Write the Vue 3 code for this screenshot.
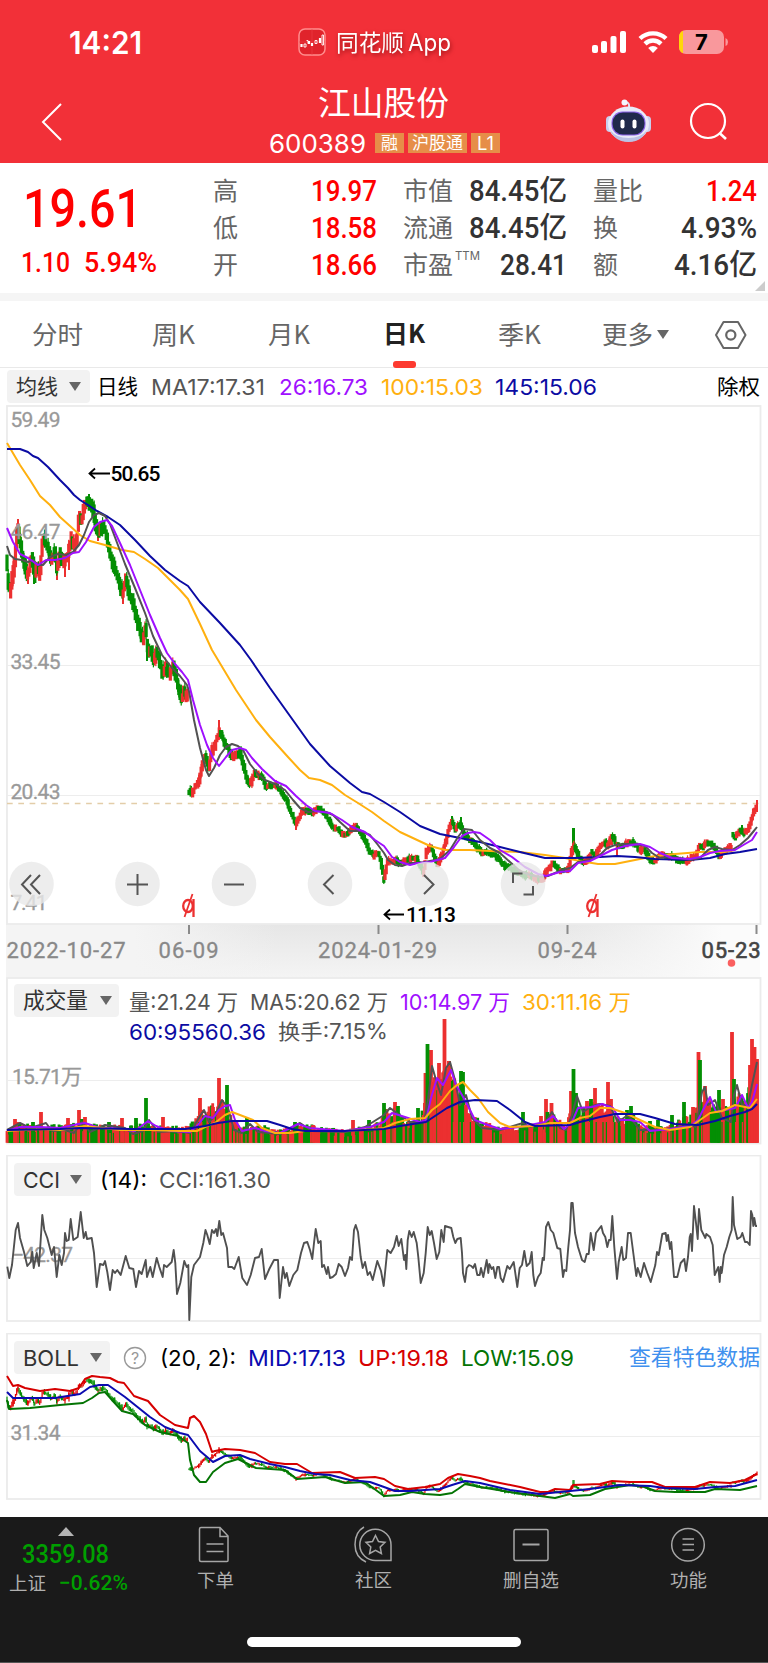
<script setup>
import { h } from "vue";

// text drawn at an exact width, box height is the cap height
const Fit = (props) => {
    const height = Math.round(props.size * 0.72);
    return h('svg', { class: 'fit', width: props.w, height, overflow: 'visible' }, [
        h('text', {
            x: 0,
            y: height,
            textLength: props.w,
            lengthAdjust: 'spacingAndGlyphs',
            'font-size': props.size,
            fill: 'currentColor'
        }, props.text)
    ]);
};
Fit.props = ['text', 'w', 'size'];

const stats = [
    [
        { label: '高', lw: 25, value: '19.97', w: 66, up: true },
        { label: '低', lw: 25, value: '18.58', w: 66, up: true },
        { label: '开', lw: 25, value: '18.66', w: 66, up: true },
    ],
    [
        { label: '市值', lw: 50, value: '84.45亿', w: 98 },
        { label: '流通', lw: 50, value: '84.45亿', w: 98 },
        { label: '市盈', lw: 50, sup: 'TTM', value: '28.41', w: 67 },
    ],
    [
        { label: '量比', lw: 50, value: '1.24', w: 51, up: true },
        { label: '换', lw: 25, value: '4.93%', w: 76 },
        { label: '额', lw: 25, value: '4.16亿', w: 83 },
    ],
];

const tabs = [
    { name: '分时', w: 51 },
    { name: '周K', w: 43 },
    { name: '月K', w: 42 },
    { name: '日K', w: 42, active: true },
    { name: '季K', w: 43 },
];

const menu = [
    { name: '下单', w: 37, icon: 'order' },
    { name: '社区', w: 37, icon: 'club' },
    { name: '删自选', w: 56, icon: 'remove' },
    { name: '功能', w: 37, icon: 'more' },
];

const tools = ['M31 875l-9 9.500 9 9.500M40 875l-9 9.500 9 9.500', 'M127 884.500h21M137.500 874v21', 'M224 884.500h20', 'M333.500 875l-9.500 9.500 9.500 9.500', 'M424 875l9.500 9.500 -9.500 9.500', 'M513 883v-9.500h9.500M533 886v8.500h-9.500'];
const toolCenters = [31.5, 137.5, 234, 330, 426.5, 523];

const parse = (str) => str.trim().split(/\s+/).map((p) => p.split(',').map(Number));

const noise = (i) => {
    const n = Math.sin(i * 127.1 + 11.7) * 43758.5453;
    return n - Math.floor(n);
};

const valueAt = (points, x) => {
    if (x <= points[0][0]) return points[0][1];
    for (let i = 1; i < points.length; i++) {
        if (x <= points[i][0]) {
            const [x0, y0] = points[i - 1];
            const [x1, y1] = points[i];
            return y0 + (y1 - y0) * (x - x0) / (x1 - x0);
        }
    }
    return points[points.length - 1][1];
};

// price path, split where the share went ex-dividend
const priceParts = [
    `7,562 8,580 10,592 13,575 15,560 17,535 18,527 20,540 22,550 24,562 27,575 29,572 32,556 35,576 37,568 40,573 42,550 44,538
    47,545 49,552 52,562 55,550 57,572 60,555 62,562 65,558 68,555 71,540 74,546 77,540 79,517 82,520 84,510 86,503 89,504 92,506
    94,514 96,527 99,532 102,527 106,532 109,548 112,560 116,570 119,580 123,594 126,580 129,592 132,598 135,612 138,622 141,632
    143,639 146,630 148,650 151,650 154,662 157,653 160,663 163,673 166,668 170,675 173,667 177,680 180,694 182,700 184,689 186,697 188,692`,
    `189,792 192,793 194,790 197,783 199,783 202,767 206,756 209,768 212,752 215,746 218,736 220,731 223,738 226,745 229,750 232,757
    236,755 240,752 243,763 246,775 249,783 252,782 255,773 259,775 263,778 266,787 270,786 274,785 278,787 282,793 286,798 290,810
    294,818 296,826 298,820 302,812 306,810 310,812 314,812 318,808 322,811 326,815 330,823 334,828 338,830 342,833 346,835 350,832
    354,826 358,828 362,835 366,842 370,852 374,856 378,852 381,860 384,880 386,870 388,860 392,862 396,860 400,863 404,861 408,859
    413,859 417,859 420,866 424,872 426,855 429,848 432,848 435,858 438,866 441,858 444,848 447,838 449,828 452,821 455,829 458,825
    461,825 464,834 468,838 473,842 478,848 482,852 486,852 490,853 494,855 498,858 502,863 506,866 510,867 515,871 520,874 525,875
    530,876 535,878 540,880 543,879 546,872 550,868 553,863 557,867 561,871 566,871 569,868 571,855 574,845 577,852 581,860 585,863
    589,858 592,852 596,855 600,846 604,843 608,845 612,836 616,843 620,846 624,845 628,843 632,842 636,845 640,850 645,850 650,860
    653,862 656,861 660,855 665,855 670,856 675,858 680,861 687,862 692,858 697,855 699,845 703,847 707,842 712,845 716,850 720,857
    724,852 728,848 732,847`,
    `733,835 736,837 740,830 744,832 748,830 751,822 753,815 756,807 757,806`,
].map(parse);

const wicks = [
    [18, 519, 540, 1], [28, 570, 584, 1], [34, 575, 584, 0], [57, 565, 580, 1], [65, 560, 577, 1], [69, 555, 570, 1],
    [89, 494, 510, 0], [98, 530, 541, 1], [123, 590, 604, 1], [147, 645, 661, 0], [219, 720, 735, 1], [296, 820, 830, 1],
    [573, 828, 850, 0], [574, 828, 852, 0], [452, 816, 826, 0], [461, 817, 830, 0], [612, 834, 845, 1], [617, 845, 856, 1],
    [742, 825, 834, 0], [757, 800, 812, 1],
];

const makeCandles = () => {
    const list = wicks.map(([x, top, bottom, up]) => ({ x, y: top, h: bottom - top, up: !!up, w: 2 }));
    let i = 0;
    for (const part of priceParts) {
        const end = part[part.length - 1][0];
        for (let x = part[0][0]; x <= end; x += 1.21) {
            i++;
            const big = x < 189 ? 1.6 : x < 260 ? 1.1 : 0.8;
            const slope = valueAt(part, x + 1.2) - valueAt(part, x - 1.2);
            const y = valueAt(part, x) + (noise(i) - 0.5) * 3 * big;
            const size = (3.5 + noise(i + 500) * 5) * big + Math.abs(slope) * 0.4;
            const up = slope + (noise(Math.floor(i / 2) + 900) - 0.5) * 6 * big < 0;
            list.push({ x, y: y - size / 2, h: size, up, w: 3.2 });
            if (noise(i + 77) > 0.75) {
                list.push({ x, y: y - size / 2 - 2.5 * big, h: size + 4 * big, up, w: 1.2 });
            }
        }
    }
    return list;
};
const candles = makeCandles();

const price = {
    ma17: '7,546 10,555 15,559 22,560 28,562 33,560 38,565 43,565 50,557 58,554 66,555 73,552 79,545 84,535 89,522 94,515 99,513 105,516 110,524 116,540 125,564 135,588 145,613 153,636 162,655 172,668 180,676 187,685 189,691 194,720 200,748 206,770 209,776 214,768 220,755 226,747 232,744 238,746 243,750 250,764 258,774 265,780 275,784 285,790 293,800 300,808 308,812 318,811 326,812 333,815 340,822 350,831 360,831 370,835 378,845 384,853 388,860 395,865 402,866 410,863 420,863 430,861 440,859 450,850 458,837 464,829 472,830 480,840 490,848 500,853 510,862 520,871 530,875 540,877 548,876 555,873 562,870 570,868 578,862 590,860 600,855 607,848 615,845 625,844 635,844 645,846 652,853 660,858 670,857 680,858 690,860 700,858 708,850 715,847 722,849 732,850 740,845 748,838 753,832 757,827',
    ma26: '7,528 13,542 20,554 28,558 38,565 46,560 55,560 65,558 73,553 79,552 86,542 94,527 100,522 107,520 112,526 120,543 130,565 140,590 150,615 160,638 167,653 175,664 182,672 188,680 193,700 200,725 207,745 213,758 219,766 226,757 232,750 240,748 246,750 252,758 262,769 275,781 286,786 296,796 306,805 315,811 330,813 342,820 352,827 365,832 375,840 384,846 392,857 400,862 410,865 418,863 430,862 445,858 454,847 462,836 468,833 474,832 480,833 490,840 500,850 512,857 525,867 538,874 546,876 560,872 570,871 578,863 590,861 600,856 612,850 625,846 640,844 650,847 660,853 672,858 690,859 700,857 710,853 720,851 735,850 745,844 752,840 757,832',
    ma100: '7,443 20,465 30,480 40,496 50,505 60,517 70,526 80,535 90,541 105,545 122,550 134,552 145,559 158,568 170,580 180,590 188,599 200,624 212,650 224,670 236,690 256,720 270,737 288,757 300,770 309,778 320,780 332,785 345,795 358,803 372,812 384,821 400,832 415,839 430,846 445,850 470,850 490,851 520,852 545,855 565,858 580,861 598,864 615,864 635,860 655,856 675,854 700,852 725,852 735,850',
    ma145: '7,449 20,449 28,452 33,456 38,458 48,467 60,480 68,488 74,495 80,500 88,505 97,511 108,517 120,525 135,540 150,556 165,570 180,581 188,586 200,602 220,623 240,645 251,660 270,688 290,716 310,744 330,766 350,783 362,792 370,794 384,802 400,812 420,826 440,834 460,838 480,842 500,847 520,852 545,858 575,858 600,857 617,856 635,857 655,859 690,860 710,858 725,854 740,852 757,849',
};

const volumeBase = parse('6,1130 14,1124 30,1126 50,1126 80,1125 110,1127 130,1126 146,1124 165,1128 190,1127 196,1118 202,1112 212,1108 220,1108 228,1114 240,1128 250,1128 260,1126 275,1130 290,1128 300,1124 320,1128 345,1131 370,1126 380,1124 384,1110 395,1112 405,1122 420,1122 424,1106 428,1068 434,1083 440,1088 446,1066 452,1070 458,1096 462,1100 468,1112 476,1120 485,1124 500,1128 515,1129 522,1124 545,1127 550,1115 556,1118 565,1128 573,1108 585,1110 595,1104 605,1106 615,1118 625,1122 632,1112 640,1126 655,1128 670,1126 680,1120 690,1118 698,1108 704,1100 712,1105 720,1110 728,1110 735,1096 745,1102 750,1080 754,1060 757,1062');
const volumeSpikes = [
    [15, 1119, 1], [33, 1122, 0], [41, 1112, 1], [68, 1118, 1], [79, 1110, 1], [82, 1119, 0], [85, 1117, 1], [109, 1122, 0],
    [122, 1118, 1], [136, 1118, 0], [146, 1098, 0], [163, 1117, 1], [200, 1098, 1], [213, 1107, 1], [222, 1100, 1], [227, 1085, 0],
    [219, 1078, 1], [247, 1118, 0], [295, 1122, 0], [313, 1125, 1], [353, 1120, 1], [369, 1120, 0], [384, 1103, 0], [395, 1102, 1],
    [398, 1106, 0], [418, 1108, 0], [425.5, 1073, 1], [431, 1050, 1], [427.5, 1044, 0], [439, 1063, 1], [444.5, 1019, 1],
    [449, 1061, 1], [461, 1071, 0], [463, 1072, 0], [466, 1105, 1], [523, 1112, 0], [541, 1116, 1], [546, 1099, 1], [547.5, 1112, 0],
    [551.5, 1103, 1], [571, 1091, 1], [573.5, 1069, 0], [576, 1093, 0], [587, 1101, 1], [591, 1099, 0], [595, 1088, 1],
    [608, 1082, 1], [611, 1099, 1], [627, 1110, 0], [631, 1106, 0], [650, 1121, 0], [658, 1120, 0], [672, 1115, 0], [684, 1102, 0],
    [693, 1107, 1], [698.5, 1052, 1], [700, 1060, 0], [705, 1086, 1], [719, 1090, 0], [723, 1099, 1], [732, 1032, 1],
    [734, 1079, 0], [741, 1095, 0], [750, 1065, 1], [752, 1039, 1], [754.5, 1047, 1], [757, 1059, 1],
];

const makeVolume = () => {
    const bars = [];
    for (let x = 7, i = 0; x < 758; x += 1.21, i++) {
        const tall = 1142.5 - valueAt(volumeBase, x);
        const hot = (x > 424 && x < 452) || x > 749;
        const up = noise(Math.floor(i / 2) + 300) > (hot ? 0.15 : 0.5);
        bars.push({ x, y: 1142.5 - tall * (0.76 + noise(i + 40) * 0.38), up, w: 2.8 });
    }
    volumeSpikes.forEach(([x, y, up]) => bars.push({ x, y, up: !!up, w: 3.8 }));
    for (let x = 8, i = 0; x < 757; x += 3.4, i++) {
        const y = Math.max(valueAt(volumeBase, x) + 6, 1122);
        if (noise(i + 610) > 0.35) bars.push({ x, y, up: noise(i + 810) > 0.5, w: 1.2 });
    }
    return bars;
};
const volumeBars = makeVolume();

const volume = {
    ma5: '7,1130 20,1123 30,1128 40,1125 46,1123 52,1131 65,1130 74,1133 82,1122 90,1132 105,1125 125,1128 133,1134 143,1131 149,1120 158,1132 175,1131 190,1133 200,1116 204,1110 209,1122 215,1116 222,1100 228,1108 234,1130 242,1133 250,1124 258,1132 280,1134 300,1123 312,1131 345,1132 365,1127 384,1115 390,1108 398,1114 410,1122 424,1122 428,1100 432,1066 436,1080 441,1095 446,1068 450,1062 455,1080 460,1105 466,1095 472,1118 482,1128 500,1130 523,1123 530,1127 545,1123 552,1112 560,1128 566,1130 572,1115 577,1096 583,1112 592,1106 600,1104 610,1106 618,1122 628,1115 640,1130 655,1130 675,1128 690,1125 696,1127 702,1092 705,1087 708,1105 715,1100 722,1118 731,1122 734,1095 737,1085 742,1105 748,1105 752,1085 757,1062',
    ma10: '7,1131 20,1127 40,1127 60,1128 78,1124 85,1123 100,1128 110,1128 135,1131 148,1121 156,1126 170,1131 190,1132 197,1126 205,1116 213,1118 219,1110 225,1106 230,1105 235,1120 242,1131 255,1128 265,1131 280,1133 298,1124 310,1128 345,1131 370,1127 384,1122 392,1113 405,1117 420,1122 426,1120 431,1098 437,1078 443,1085 451,1070 456,1085 462,1095 468,1106 475,1120 485,1124 500,1129 520,1127 545,1122 553,1116 564,1129 572,1122 578,1108 592,1107 602,1104 613,1108 620,1120 630,1120 640,1122 650,1131 670,1129 690,1126 698,1120 704,1108 710,1097 716,1112 725,1110 735,1108 742,1095 748,1108 752,1102 757,1084',
    ma30: '7,1131 40,1129 60,1130 85,1126 120,1130 150,1130 180,1131 197,1131 205,1127 215,1123 225,1115 232,1112 240,1115 253,1120 262,1128 275,1133 290,1133 305,1131 345,1131 375,1129 384,1128 395,1123 410,1119 425,1118 432,1110 440,1104 450,1091 457,1085 463,1082 470,1090 478,1098 488,1112 500,1123 510,1127 535,1126 550,1123 570,1123 580,1118 590,1116 600,1108 610,1108 625,1113 640,1120 655,1127 670,1130 690,1127 700,1120 710,1113 722,1111 735,1105 750,1108 757,1099',
    ma60: '7,1130 60,1129 80,1128 130,1129 185,1129 205,1126 218,1123 232,1121 250,1121 267,1121 280,1125 292,1129 305,1131 345,1131 384,1129 400,1126 426,1122 435,1116 447,1108 460,1102 475,1100 497,1101 510,1110 525,1122 535,1126 570,1125 580,1122 600,1117 615,1114 640,1114 655,1118 675,1124 698,1125 715,1121 730,1116 745,1112 752,1109 757,1104',
};

const cci = `7.3,1266.7 9.3,1278 12,1265 15.7,1230 18,1223 20,1238 24,1252 27.3,1266 30.7,1262 32.3,1252 33.7,1268 36.7,1253 39,1266 42.3,1215
44.3,1230 47.3,1238 51.7,1255 54,1247 56.7,1277 59.3,1255 61.7,1265 64,1253 65,1233 66.7,1241 68.7,1240 70.7,1219 73.3,1240 77.7,1237
80.7,1212 83.7,1238 85.7,1232 87,1239 91.7,1238 94,1253 96.7,1287 100,1264 103.3,1265 105,1261 107.3,1272 110,1290 112.7,1270 115,1273
117.3,1270 120.7,1275 125.7,1256 129.3,1268 133.3,1269 136,1287 139,1271 141.7,1274 145.7,1260 147,1277 150.3,1267 152.7,1277 156.7,1258
159.3,1267 162.7,1277 164,1265 166.7,1267 171.7,1262 173.7,1250 175.3,1263 177,1294 180.3,1283 184.3,1261 186.7,1267 188.3,1265 189.3,1320
191.3,1277 194,1265 200,1257 203.3,1243 205.5,1230 207.3,1235 209.7,1244 212,1230 214,1233 216,1229 217.3,1236 219.3,1221 221.3,1235
223,1233 227,1248 228.3,1267 232,1267 234.3,1269 238.7,1257 242.3,1278 247,1285 250.7,1275 255,1258 259,1257 261.7,1249 265,1279
269.3,1269 274,1260 278,1260 279.7,1298 283,1267 285,1278 286.7,1273 289.3,1286 293.3,1275 297.3,1270 301,1253 304,1243 307.3,1242
310,1250 312.3,1259 314,1243 315.7,1229 318.3,1243 320.7,1241 322,1267 324,1265 326.7,1274 328,1267 330,1278 332.7,1277 336,1274
338.7,1264 341.7,1267 345,1276 348,1268 350,1257 352,1260 354,1230 355.7,1225 358,1232 360.7,1257 362.7,1268 365,1262 367.7,1275
370,1272 372.7,1280 377.3,1261 381,1271 383.7,1286 387.3,1250 390.7,1253 394,1247 396.7,1236 398.7,1246 401.3,1239 404,1260 405.3,1255
406.3,1269 407.7,1240 409.3,1231 411.7,1237 413.7,1232 416.7,1243 418.3,1257 420.7,1283 423.7,1273 425.7,1253 427.7,1227 429.7,1235
431.7,1231 434,1243 436.7,1259 439.3,1252 441.3,1230 443.7,1242 445,1226 451.3,1228 453.3,1237 455.3,1243 457.3,1239 460.7,1238
462,1253 463,1273 465,1282 466.7,1268 469,1265 471.3,1266 473,1268 475,1264 477.3,1275 479.7,1275 481,1268 483.3,1277 486.7,1260
488.3,1273 489.3,1264 491.7,1269 493.3,1267 495.3,1278 497.3,1267 499,1267 500.7,1278 503,1282 507.3,1266 509.7,1269 513.7,1262
517.3,1287 519.7,1268 522,1265 524.3,1251 526.7,1266 529.7,1263 531.7,1252 533.3,1275 535,1286 538,1277 540.7,1273 542.7,1258
544,1260 546,1227 548.3,1222 550.7,1230 553.3,1233 557.3,1248 560.3,1249 563,1277 564.3,1270 566.3,1271 568.3,1247 570,1230
571.3,1203 572.7,1203 575,1233 578,1247 582,1260 584.7,1262 586.7,1254 588.7,1254 590.7,1233 593.7,1250 596,1233 599,1229 601.3,1226
603,1233 605.3,1237 607.3,1247 609,1240 610.7,1240 612.3,1216 614.3,1247 617,1279 618.7,1262 621.7,1247 623.3,1260 626,1258 628,1233
630.7,1233 633.3,1253 636.3,1276 637.7,1268 640.7,1277 644,1263 647.3,1273 650.7,1282 655.3,1265 657,1252 658.7,1255 662.3,1234
665.7,1233 666.7,1241 668,1235 670,1249 671.3,1242 674,1277 677.3,1277 680.7,1263 684.3,1259 686,1271 688,1257 689.7,1237 690.7,1234
692,1251 694,1206 696,1223 697.7,1239 699,1209 701.3,1230 705.3,1238 706.3,1234 710,1237 712.7,1245 714.7,1275 718.3,1267 719.7,1282
720.7,1267 721.7,1273 724,1255 726.7,1247 729.3,1237 731.7,1230 732.7,1197 734,1225 737.3,1239 740.7,1237 742.3,1233 745,1242
747.3,1242 749.7,1245 751,1211 752.3,1215 753.3,1226 754.3,1218 755.7,1226 757,1226`;

const boll = {
    mid: '7,1392 13,1398 30,1398 55,1398 80,1394 90,1387 99,1385 108,1385 125,1397 150,1417 165,1427 180,1433 188,1435 200,1451 213,1462 225,1456 240,1455 250,1459 270,1464 285,1467 300,1471 315,1474 330,1475 350,1480 370,1482 384,1487 395,1491 410,1491 440,1489 452,1485 465,1481 480,1483 510,1490 540,1494 560,1492 590,1489 620,1485 650,1486 665,1488 695,1489 715,1487 735,1486 757,1480',
    up: '7,1376 13,1386 18,1385 25,1388 40,1391 55,1389 70,1391 79,1388 85,1379 92,1376 100,1377 110,1378 118,1382 124,1383 134,1396 148,1401 160,1415 175,1425 188,1428 190,1418 194,1416 200,1422 206,1434 212,1452 215,1451 225,1449 240,1450 255,1453 270,1462 285,1464 297,1464 312,1473 340,1472 355,1478 375,1477 384,1479 395,1486 408,1489 425,1487 440,1484 448,1478 458,1474 470,1476 480,1478 490,1481 520,1487 540,1492 548,1492 555,1489 570,1490 573,1485 600,1484 612,1481 630,1482 652,1482 665,1487 695,1487 710,1482 730,1483 745,1480 757,1474',
    low: '7,1400 9,1409 30,1408 60,1405 83,1403 92,1398 99,1393 105,1392 112,1400 122,1411 133,1414 145,1425 160,1432 178,1436 188,1443 190,1460 194,1475 200,1482 206,1482 213,1472 225,1463 238,1459 248,1464 256,1468 285,1470 297,1479 325,1477 345,1483 365,1482 384,1496 400,1495 412,1492 425,1494 440,1495 452,1493 458,1489 465,1484 480,1487 510,1492 540,1496 555,1498 570,1494 573,1496 590,1495 605,1489 630,1485 645,1487 655,1491 675,1492 705,1492 715,1489 740,1490 757,1486',
};
const bollCandles = candles.map((c) => ({ ...c, y: 1380 + (c.y - 500) * 0.305, h: c.h * 0.32 }));
</script>

<template>
    <div class="page">
        <header class="header">
            <div class="status">
                <Fit class="time" text="14:21" :w="73" :size="31" />
                <div class="app">
                    <svg width="28" height="28" viewBox="0 0 28 28">
                        <rect x="1" y="1" width="26" height="26" rx="6" fill="#e0232b" stroke="#ff8d8d" stroke-width="1.5" />
                        <path d="M1 14h26M14 1v26" stroke="#ef4148" stroke-width=".6" />
                        <path d="M3.500 16v3M11 13v3M14 15v3M22 10v5" stroke="#fff" stroke-width="2.200" />
                        <path d="M6 16h2v3h-2zM8.500 12.500h1.500v3M17 12.500h2v3h-2zM24 7h1.500v10h-1.500z" stroke="#fff" stroke-width=".9" fill="none" />
                    </svg>
                    <Fit class="app-name" text="同花顺" :w="68" :size="23" />
                    <Fit class="app-name latin" text="App" :w="43" :size="24" />
                </div>
                <svg class="signals" width="138" height="28" viewBox="592 28 138 28">
                    <g fill="#fff">
                        <rect x="592" y="45" width="6" height="8" rx="2" />
                        <rect x="601" y="41" width="6" height="12" rx="2" />
                        <rect x="610.500" y="36" width="6" height="17" rx="2" />
                        <rect x="620" y="31" width="6" height="22" rx="2" />
                    </g>
                    <g fill="none" stroke="#fff" stroke-width="4.400">
                        <path d="M640 38.500a19 19 0 0 1 26 0" />
                        <path d="M645 43.800a11.500 11.500 0 0 1 16 0" />
                    </g>
                    <path d="M653 53l-4.800-5a7 7 0 0 1 9.600 0z" fill="#fff" />
                    <rect x="679" y="30" width="45" height="24" rx="7" fill="#f9989c" />
                    <path d="M683 30.700a7 7 0 0 0-4 6.300v10a7 7 0 0 0 4 6.300z" fill="#ffd60a" />
                    <path d="M725.500 38q2.500 1 2.500 4t-2.500 4z" fill="#f9989c" />
                    <text x="701.500" y="50" text-anchor="middle" class="battery">7</text>
                </svg>
            </div>
            <div class="nav">
                <svg class="back" width="24" height="40" viewBox="0 0 24 40">
                    <path d="M21 2L3 20l18 18" fill="none" stroke="#fff" stroke-width="2" />
                </svg>
                <div class="titles">
                    <Fit class="title" text="江山股份" :w="131" :size="32.5" />
                    <div class="code-line">
                        <Fit class="code latin" text="600389" :w="97" :size="26" />
                        <span class="badge"><Fit text="融" :w="17" :size="17" /></span>
                        <span class="badge b3"><Fit text="沪股通" :w="51" :size="17" /></span>
                        <span class="badge"><Fit class="latin" text="L1" :w="17" :size="18" /></span>
                    </div>
                </div>
                <svg class="robot" width="48" height="46" viewBox="604 98 48 46">
                    <path d="M629 108q1-6-4-6" fill="none" stroke="#dfe3f5" stroke-width="2" />
                    <circle cx="624.500" cy="102.500" r="3" fill="#f4f5fd" />
                    <rect x="606" y="116" width="8" height="16" rx="4" fill="#c9cfee" />
                    <rect x="643" y="116" width="8" height="16" rx="4" fill="#c9cfee" />
                    <ellipse cx="628.500" cy="124" rx="20.500" ry="17.500" fill="#e9ebf9" />
                    <path d="M610 130q5 12 18.500 12t18.500-12q-6 8-18.500 8t-18.500-8" fill="#b9c2e6" />
                    <rect x="611.500" y="111.500" width="34" height="24" rx="11" fill="#8a62e8" />
                    <rect x="612.500" y="112.500" width="32" height="22" rx="10.500" fill="#202a4b" />
                    <rect x="620.500" y="119.500" width="4" height="9" rx="2" fill="#fff" />
                    <rect x="632.500" y="119.500" width="4" height="9" rx="2" fill="#fff" />
                </svg>
                <svg class="search" width="40" height="40" viewBox="688 102 40 40">
                    <circle cx="708" cy="121" r="17" fill="none" stroke="#fff" stroke-width="2.200" />
                    <path d="M720 133.500l6 5.500" stroke="#fff" stroke-width="2.600" />
                </svg>
            </div>
        </header>

        <section class="quote">
            <div class="price">
                <Fit class="last din" text="19.61" :w="119" :size="54.5" />
                <div class="change">
                    <Fit class="din" text="1.10" :w="49" :size="27.5" />
                    <Fit class="din" text="5.94%" :w="73" :size="27.5" />
                </div>
            </div>
            <div v-for="(col, i) in stats" :key="i" class="stat-col">
                <div v-for="row in col" :key="row.label" class="stat">
                    <Fit :text="row.label" :w="row.lw" :size="25" />
                    <Fit v-if="row.sup" class="sup latin" :text="row.sup" :w="25" :size="12" />
                    <Fit class="stat-value din" :class="{ up: row.up }" :text="row.value" :w="row.w" :size="29" />
                </div>
            </div>
            <svg class="corner" width="10" height="10"><path d="M10 0v10h-10z" fill="#ccc" /></svg>
        </section>

        <nav class="tabs">
            <div v-for="tab in tabs" :key="tab.name" class="tab" :class="{ active: tab.active }">
                <Fit :text="tab.name" :w="tab.w" :size="25" />
            </div>
            <div class="tab more">
                <Fit text="更多" :w="51" :size="25" />
                <svg width="12" height="9"><path d="M0 0h12l-6 9z" fill="#666" /></svg>
            </div>
            <div class="tab">
                <svg width="34" height="32" viewBox="0 0 34 32">
                    <path d="M9.500 3h14.500l7.500 13-7.500 13h-14.500l-7.500-13z" fill="none" stroke="#666" stroke-width="2" stroke-linejoin="round" />
                    <circle cx="16.800" cy="16" r="4.600" fill="none" stroke="#666" stroke-width="2.200" />
                </svg>
            </div>
        </nav>

        <div class="ma-row">
            <span class="picker">
                <Fit text="均线" :w="42" :size="21" />
                <svg width="12" height="9"><path d="M0 0h12l-6 9z" fill="#666" /></svg>
            </span>
            <Fit class="black" text="日线" :w="41" :size="21" />
            <Fit class="gray latin" text="MA17:17.31" :w="114" :size="22" />
            <Fit class="purple latin" text="26:16.73" :w="89" :size="22" />
            <Fit class="orange latin" text="100:15.03" :w="102" :size="22" />
            <Fit class="navy latin" text="145:15.06" :w="102" :size="22" />
            <Fit class="black right" text="除权" :w="43" :size="21" />
        </div>

        <svg class="chart" width="768" height="572" viewBox="0 405 768 572">
            <defs>
                <linearGradient id="axisTop" x1="0" y1="0" x2="0" y2="1">
                    <stop offset="0" stop-color="#e6e6e6" />
                    <stop offset="1" stop-color="#f4f4f4" />
                </linearGradient>
                <linearGradient id="axisSide" x1="0" x2="1" y1="0" y2="0">
                    <stop offset="0" stop-color="#f4f4f4" />
                    <stop offset=".17" stop-color="#f4f4f4" />
                    <stop offset=".36" stop-color="#f4f4f4" stop-opacity="0" />
                    <stop offset=".72" stop-color="#f4f4f4" stop-opacity="0" />
                    <stop offset=".95" stop-color="#fbfbfb" />
                    <stop offset="1" stop-color="#fbfbfb" />
                </linearGradient>
            </defs>
            <rect x="6" y="924" width="754" height="53" fill="url(#axisTop)" />
            <rect x="6" y="924" width="754" height="53" fill="url(#axisSide)" />
            <path d="M7 535.500h753M7 665.500h753M7 795.500h753" stroke="#ededed" stroke-width="1.200" />
            <rect x="7" y="406" width="753.500" height="518" fill="none" stroke="#ebebeb" stroke-width="1.800" />
            <path d="M7 803.500h753" stroke="#e3cda9" stroke-width="1.300" stroke-dasharray="5.700 5.600" />
            <rect v-for="(c, i) in candles" :key="i" :x="c.x - c.w / 2" :y="c.y" :width="c.w" :height="c.h" :fill="c.up ? '#ec3030' : '#048f04'" />
            <g class="din axis-text">
                <text x="10.500" y="427" textLength="50">59.49</text>
                <text x="10.500" y="539" textLength="50">46.47</text>
                <text x="10.500" y="669" textLength="50">33.45</text>
                <text x="10.500" y="798.500" textLength="50">20.43</text>
                <text x="10.500" y="909.500" textLength="37">7.41</text>
            </g>
            <g class="lines">
                <polyline :points="price.ma100" stroke="#ffb00f" />
                <polyline :points="price.ma145" stroke="#0b0ba3" />
                <polyline :points="price.ma17" stroke="#525252" />
                <polyline :points="price.ma26" stroke="#9f10ff" />
            </g>
            <g fill="none" stroke="#000" stroke-width="1.800">
                <path d="M110 473.500h-20M95 468.500l-5.500 5 5.500 5" />
                <path d="M404 914.500h-19M390 909.500l-5.500 5 5.500 5" />
            </g>
            <g class="din mark-text">
                <text x="110.500" y="481" textLength="50">50.65</text>
                <text x="406" y="922" textLength="50">11.13</text>
            </g>
            <g v-for="x in [188.5, 592.5]" :key="x" fill="none" stroke="#ec3030" stroke-width="2.300">
                <path :d="`M${x + 5} 899v18`" />
                <ellipse :cx="x - 0.500" cy="906" rx="4.800" ry="6" />
                <path :d="`M${x - 4} 917l8-23`" stroke-width="1.800" />
            </g>
            <g v-for="(d, i) in tools" :key="d">
                <circle :cx="toolCenters[i]" cy="884" r="22.300" fill="#e8e8e8" fill-opacity=".8" />
                <path :d="d" fill="none" stroke="#555" stroke-width="2" />
            </g>
            <path d="M189 925v9M378.500 925v9M567.500 925v9M756.500 925v9" stroke="#8a8a8a" stroke-width="2" />
            <g class="din date-text">
                <text x="6.500" y="957.500" textLength="119">2022-10-27</text>
                <text x="158.500" y="957.500" textLength="60">06-09</text>
                <text x="318" y="957.500" textLength="119">2024-01-29</text>
                <text x="537.500" y="957.500" textLength="59">09-24</text>
                <text x="701.500" y="957.500" textLength="59" class="today">05-23</text>
            </g>
            <circle cx="731.500" cy="963" r="3.800" fill="#fa5f5f" />
        </svg>

        <section class="panel">
            <svg class="chart" width="768" height="178" viewBox="0 977 768 178">
                <path d="M7 1080.500h753" stroke="#ededed" stroke-width="1.200" />
                <rect x="7" y="978" width="753.500" height="165.500" fill="none" stroke="#ebebeb" stroke-width="1.800" />
                <rect v-for="(b, i) in volumeBars" :key="i" :x="b.x - b.w / 2" :y="b.y" :width="b.w" :height="1142.8 - b.y" :fill="b.up ? '#ec3030' : '#048f04'" />
                <text class="din axis-text" x="12" y="1084" textLength="70">15.71万</text>
                <g class="lines">
                    <polyline :points="volume.ma5" stroke="#525252" />
                    <polyline :points="volume.ma10" stroke="#9f10ff" />
                    <polyline :points="volume.ma30" stroke="#ffb00f" />
                    <polyline :points="volume.ma60" stroke="#0b0ba3" />
                </g>
            </svg>
            <div class="panel-head">
                <span class="picker vol">
                    <Fit text="成交量" :w="65" :size="21.5" />
                    <svg width="12" height="9"><path d="M0 0h12l-6 9z" fill="#666" /></svg>
                </span>
                <div class="vol-values">
                    <div class="vol-line first">
                        <Fit class="gray latin" text="量:21.24 万" :w="109" :size="22" />
                        <Fit class="gray latin" text="MA5:20.62 万" :w="138" :size="22" />
                        <Fit class="purple latin" text="10:14.97 万" :w="110" :size="22" />
                        <Fit class="orange latin" text="30:11.16 万" :w="109" :size="22" />
                    </div>
                    <div class="vol-line second">
                        <Fit class="navy latin" text="60:95560.36" :w="137" :size="22" />
                        <Fit class="gray latin" text="换手:7.15%" :w="110" :size="21" />
                    </div>
                </div>
            </div>
        </section>

        <section class="panel">
            <svg class="chart" width="768" height="178" viewBox="0 1155 768 178">
                <path d="M7 1258.500h753" stroke="#ededed" stroke-width="1.200" />
                <rect x="7" y="1155.500" width="753.500" height="165.500" fill="none" stroke="#ebebeb" stroke-width="1.800" />
                <text class="din axis-text" x="12" y="1262" textLength="61">−42.37</text>
                <polyline class="cci-line" :points="cci" />
            </svg>
            <div class="panel-head cci">
                <span class="picker">
                    <Fit class="latin" text="CCI" :w="37" :size="22" />
                    <svg width="12" height="9"><path d="M0 0h12l-6 9z" fill="#666" /></svg>
                </span>
                <Fit class="black latin" text="(14):" :w="47" :size="22" />
                <Fit class="gray latin" text="CCI:161.30" :w="112" :size="22" />
            </div>
        </section>

        <section class="panel">
            <svg class="chart" width="768" height="184" viewBox="0 1333 768 184">
                <path d="M7 1436.500h753" stroke="#ededed" stroke-width="1.200" />
                <rect x="7" y="1333.500" width="753.500" height="165.500" fill="none" stroke="#ebebeb" stroke-width="1.800" />
                <text class="din axis-text" x="10.500" y="1440" textLength="50">31.34</text>
                <rect v-for="(c, i) in bollCandles" :key="i" :x="c.x - 0.6" :y="c.y" width="1.2" :height="c.h" :fill="c.up ? '#e00000' : '#048f04'" />
                <g class="lines">
                    <polyline :points="boll.up" stroke="#d60000" />
                    <polyline :points="boll.low" stroke="#047404" />
                    <polyline :points="boll.mid" stroke="#0b0bb0" />
                </g>
            </svg>
            <div class="panel-head boll">
                <span class="picker">
                    <Fit class="latin" text="BOLL" :w="56" :size="22" />
                    <svg width="12" height="9"><path d="M0 0h12l-6 9z" fill="#666" /></svg>
                </span>
                <svg width="24" height="24" viewBox="0 0 24 24">
                    <circle cx="12" cy="12" r="10.500" fill="none" stroke="#999" stroke-width="1.400" />
                    <text x="12" y="17.500" text-anchor="middle" class="help">?</text>
                </svg>
                <Fit class="black latin" text="(20, 2):" :w="76" :size="22" />
                <Fit class="blue latin" text="MID:17.13" :w="98" :size="22" />
                <Fit class="red latin" text="UP:19.18" :w="91" :size="22" />
                <Fit class="green latin" text="LOW:15.09" :w="113" :size="22" />
                <Fit class="link right" text="查看特色数据" :w="131" :size="21.5" />
            </div>
        </section>

        <footer class="footer">
            <div class="menu">
                <div class="index">
                    <svg width="16" height="9"><path d="M8 0l8 9h-16z" fill="#b5b5b5" /></svg>
                    <Fit class="din" text="3359.08" :w="87" :size="25" />
                    <div class="index-line">
                        <Fit class="index-name" text="上证" :w="37" :size="18.5" />
                        <Fit class="din" text="−0.62%" :w="69" :size="21" />
                    </div>
                </div>
                <div v-for="item in menu" :key="item.name" class="menu-item">
                    <svg width="38" height="38" viewBox="0 0 38 38" fill="none" stroke="#a6a6a6" stroke-width="1.500">
                        <template v-if="item.icon === 'order'">
                            <path d="M5 1.500h19l8 8.500v24.500a1 1 0 0 1-1 1h-26a1.500 1.500 0 0 1-1.500-1.500v-31a1.500 1.500 0 0 1 1.500-1.500zM24 1.500v9h8M10.500 18h17M10.500 25.500h17" />
                        </template>
                        <template v-else-if="item.icon === 'club'">
                            <path d="M37 34.500h-15a15.600 15.600 0 1 1 15-15.600zM10 1q-9 5-9 17.500t11 17.500" />
                            <path d="M21.500 9.500l3 6 6.500.900-4.800 4.600 1.200 6.500-5.900-3.100-5.900 3.100 1.200-6.500-4.800-4.600 6.500-.900z" />
                        </template>
                        <template v-else-if="item.icon === 'remove'">
                            <rect x="2" y="3.500" width="34" height="31" rx="1.500" />
                            <path d="M10.500 18.500h17" stroke-width="2" />
                        </template>
                        <template v-else>
                            <circle cx="19" cy="18.800" r="16.300" />
                            <path d="M13.500 13h11.500M13.500 18.500h11.500M13.500 24h11.500" stroke-width="1.700" />
                        </template>
                    </svg>
                    <Fit :text="item.name" :w="item.w" :size="18.5" />
                </div>
            </div>
            <div class="home-bar"></div>
        </footer>
    </div>
</template>

<style>
body {
    background: #fff;
}
</style>

<style scoped>
.page {
    width: 768px;
    height: 1663px;
    overflow: hidden;
    background: #fff;
    color: #333;
    font-family: "Noto Sans CJK SC", sans-serif;
}

svg {
    display: block;
    flex: none;
}

.latin {
    font-family: Inter, "Noto Sans CJK SC", sans-serif;
}

.din {
    font-family: Roboto, "Noto Sans CJK SC", sans-serif;
    font-weight: 500;
}

.header {
    height: 163px;
    box-sizing: border-box;
    background: #f23038;
    color: #fff;
}

.status {
    display: flex;
    align-items: center;
    height: 84px;
    padding: 0 38px 0 69px;
}

.time {
    margin-top: 1px;
    font-family: Inter, sans-serif;
    font-weight: 600;
}

.app {
    display: flex;
    align-items: center;
    margin-left: 156px;
}

.app-name {
    margin-left: 10px;
    filter: drop-shadow(1px 2px 2px rgba(100, 0, 0, 0.6));
}

.app-name + .app-name {
    margin-left: 4px;
}

.signals {
    margin-left: auto;
}

.battery {
    font: 700 22px Inter, sans-serif;
    fill: #000;
}

.nav {
    display: flex;
    height: 79px;
    padding: 0 40px 0 40px;
}

.back {
    margin-top: 18px;
}

.titles {
    width: 233px;
    margin: 8px 102px 0 205px;
    display: flex;
    flex-direction: column;
}

.title {
    margin-left: 49px;
}

.code-line {
    display: flex;
    align-items: center;
    margin-top: 18px;
    height: 20px;
    gap: 4px;
}

.code {
    margin-right: 5px;
}

.badge {
    display: flex;
    justify-content: center;
    align-items: center;
    width: 29px;
    height: 20px;
    flex: none;
    background: #e68e48;
}

.b3 {
    width: 59px;
}

.robot {
    margin-top: 14px;
}

.search {
    margin: 18px 0 0 36px;
}

.quote {
    display: flex;
    height: 130px;
    box-sizing: border-box;
    padding: 9px 0 0 21px;
}

.price {
    width: 192px;
    color: #ff0000;
}

.last {
    margin: 16px 0 0 2px;
}

.change {
    display: flex;
    gap: 14px;
    margin-top: 25px;
}

.stat-col {
    width: 164px;
    margin-right: 26px;
    color: #666;
}

.stat-col:nth-child(4) {
    margin-right: 0;
}

.stat {
    display: flex;
    align-items: center;
    height: 37px;
}

.sup {
    margin: -18px 0 0 2px;
}

.stat-value {
    margin-left: auto;
    color: #333;
}

.up {
    color: #ff0000;
}

.corner {
    align-self: flex-end;
    margin: 0 0 2px -2px;
}

.tabs {
    display: grid;
    grid-template-columns: repeat(6, 115.5px) 1fr;
    height: 75px;
    box-sizing: border-box;
    border-top: 8px solid #f5f5f5;
    border-bottom: 1px solid #e9e9e9;
    color: #666;
}

.tab {
    display: flex;
    align-items: center;
    justify-content: center;
    gap: 4px;
}

.active {
    flex-direction: column;
    gap: 0;
    color: #222;
    font-weight: 700;
}

.active > * {
    margin-top: 24px;
}

.active::after {
    content: "";
    width: 23px;
    height: 7px;
    margin-top: 18px;
    border-radius: 3px;
    background: #fd3a30;
}

.ma-row {
    display: grid;
    grid-template-columns: 90px 54px 128px 102px 114px 1fr auto;
    align-items: center;
    height: 37px;
    padding: 0 8px 0 7px;
}

.picker {
    display: flex;
    align-items: center;
    justify-content: space-between;
    width: 83px;
    height: 33px;
    box-sizing: border-box;
    padding: 0 9px 0 9px;
    border-radius: 4px;
    background: #f2f2f2;
    color: #333;
}

.black { color: #000; }
.gray { color: #555; }
.purple { color: #9f10ff; }
.orange { color: #ffb00f; }
.navy { color: #0b0ba3; }
.blue { color: #0b0bb0; }
.red { color: #d60000; }
.green { color: #047404; }
.link { color: #4090ee; }

.right {
    margin-left: auto;
}

.axis-text {
    font-size: 21px;
    font-weight: 400;
    fill: #999;
    stroke: #999;
    stroke-width: 0.3;
}

.mark-text {
    font-size: 21px;
    fill: #000;
}

.date-text {
    font-size: 22px;
    font-weight: 400;
    fill: #888;
    stroke: #888;
    stroke-width: 0.3;
}

.today {
    fill: #444;
    stroke: #444;
    stroke-width: 0.6;
}

.lines {
    fill: none;
    stroke-width: 2;
    stroke-linejoin: round;
}

.cci-line {
    fill: none;
    stroke: #505050;
    stroke-width: 1.9;
    stroke-linejoin: round;
}

.panel {
    display: grid;
}

.panel > * {
    grid-area: 1 / 1;
}

.panel-head {
    display: flex;
    align-items: center;
    align-self: start;
    height: 33px;
    margin: 7px 9px 0 14px;
}

.vol {
    width: 105px;
}

.vol > svg:last-child {
    margin-right: -2px;
}

.vol-values {
    align-self: flex-start;
    margin: 10px 0 0 10px;
}

.vol-line {
    display: flex;
    gap: 12px;
}

.second {
    margin-top: 14px;
}

.cci {
    margin-top: 8px;
}

.cci .picker {
    width: 77px;
    margin-right: 9px;
}

.cci .gray {
    margin-left: 12px;
}

.boll {
    margin-top: 8px;
}

.boll .picker {
    width: 96px;
    padding-right: 8px;
    margin-right: 13px;
}

.boll .black {
    margin-left: 13px;
}

.boll .black ~ .fit:not(.link) {
    margin-left: 12px;
}

.boll .link {
    margin-right: -1px;
}

.help {
    font: 16px Inter, sans-serif;
    fill: #999;
    stroke: none;
}

.footer {
    height: 145px;
    background: #1a1a1a;
    color: #b0b0b0;
    border-bottom: 1px solid #555;
}

.menu {
    display: flex;
    height: 120px;
}

.index {
    display: flex;
    flex-direction: column;
    width: 136px;
    align-items: center;
    padding: 10px 5px 0 0;
    box-sizing: border-box;
    color: #009f00;
}

.index > .din {
    margin: 9px 0 0 0;
}

.index-line {
    display: flex;
    gap: 13px;
    margin: 12px 0 0 6px;
}

.index-name {
    color: #b0b0b0;
    margin-top: 2px;
}

.menu-item {
    display: flex;
    flex-direction: column;
    align-items: center;
    width: 158px;
    padding-top: 9px;
}

.menu-item:last-child {
    width: 156px;
}

.menu-item .fit {
    margin-top: 10px;
}

.home-bar {
    width: 274px;
    height: 10px;
    margin: 0 auto;
    border-radius: 5px;
    background: #fff;
}
</style>
